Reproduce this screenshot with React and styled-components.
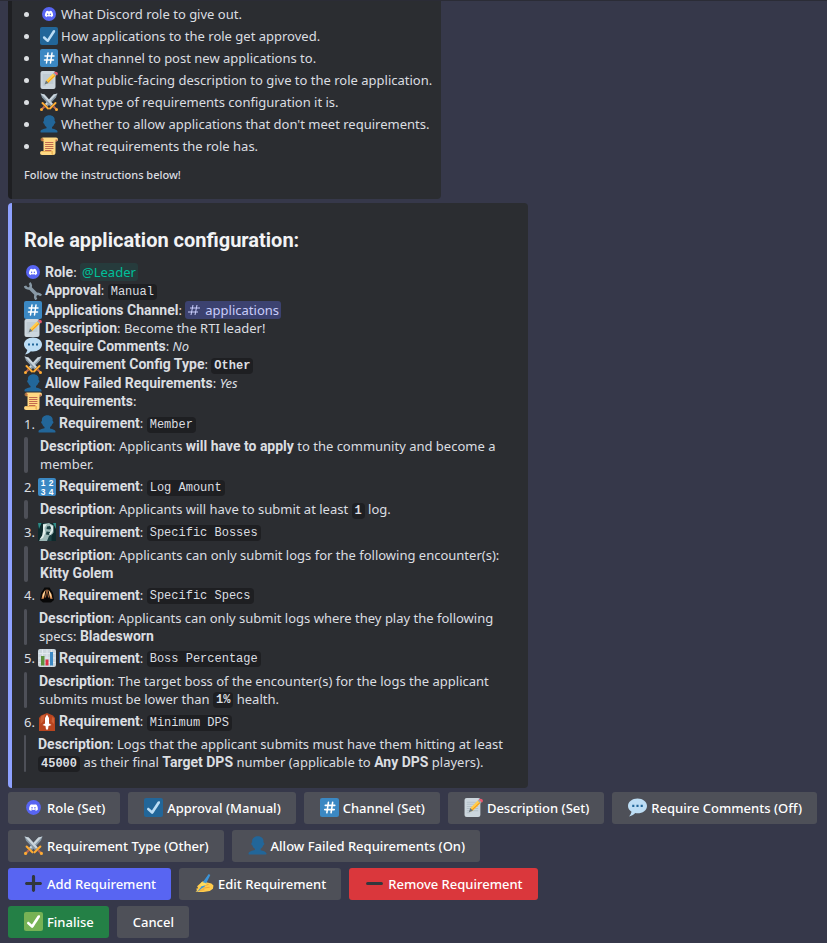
import React from "react";
import styled, { createGlobalStyle } from "styled-components";
import { FaDiscord } from "react-icons/fa";

const GlobalStyle = createGlobalStyle`
  * { box-sizing: border-box; }
  body {
    margin: 0;
    background: #36384a;
    color: #dbdee1;
    font-family: "Noto Sans", "Open Sans", sans-serif;
    font-size: 13px;
    line-height: 18px;
  }
  h2, p, ul, ol, blockquote { margin: 0; padding: 0; }
  b {
    font-family: Roboto, "Noto Sans", sans-serif;
    font-size: 14px;
    line-height: 14px;
  }
`;

const Page = styled.main`
  display: flex;
  flex-direction: column;
  align-items: flex-start;
  min-height: 100vh;
  padding: 0 8px 4px;
  border-top: 1px solid #2b2c36;
`;

const Embed = styled.article`
  max-width: 520px;
  background: #2b2d31;
  border-left: 4px solid ${(p) => p.$accent};
  border-radius: ${(p) => (p.$continued ? "0 0 4px 4px" : "4px")};
  padding: ${(p) => (p.$continued ? "4px 9px 16px 12px" : "25px 16px 16px 12px")};
  margin-bottom: 4px;
`;

const StepList = styled.ul`
  list-style: none;
  display: flex;
  flex-direction: column;
  gap: 4px;
`;

const Step = styled.li`
  display: flex;
  align-items: center;
  height: 18px;
  white-space: nowrap;
  &::before {
    content: "";
    width: 5px;
    height: 5px;
    margin-right: 11px;
    border-radius: 50%;
    background: #dbdee1;
  }
`;

const Footer = styled.p`
  margin-top: 12px;
  font-size: 11px;
  line-height: 16px;
  font-weight: 500;
`;

const Title = styled.h2`
  margin-bottom: 11px;
  font-family: Roboto, "Noto Sans", sans-serif;
  font-size: 20px;
  line-height: 24px;
  font-weight: 700;
  color: #f2f3f5;
`;

const Field = styled.div`
  display: flex;
  align-items: center;
  height: ${(p) => (p.$tall ? 19 : 18)}px;
  white-space: nowrap;
`;

const IconSvg = styled.svg`
  flex: none;
  width: ${(p) => p.$size}px;
  height: ${(p) => p.$size}px;
  margin-right: ${(p) => p.$gap}px;
`;

const Code = styled.code`
  display: inline-block;
  height: 16px;
  padding: 0 3px;
  border-radius: 4px;
  background: #1e1f22;
  font-family: "Liberation Mono", monospace;
  font-size: 12px;
  line-height: 16px;
  vertical-align: middle;
`;

const RoleMention = styled.a`
  display: inline-block;
  padding: 0 2px;
  border-radius: 3px;
  background: #263b3c;
  color: #00c09a;
  text-decoration: none;
`;

const ChannelMention = styled.a`
  display: inline-flex;
  align-items: center;
  gap: 5px;
  height: 18px;
  padding: 0 2px 0 3px;
  border-radius: 3px;
  background: #3c4270;
  color: #c9cdfb;
  text-decoration: none;
  vertical-align: bottom;
`;

const RequirementList = styled.ol`
  list-style: none;
  margin-top: 4px;
  display: flex;
  flex-direction: column;
  gap: 4px;
`;

const Requirement = styled.li`
  display: flex;
  flex-direction: column;
  gap: 4px;
`;

const Ordinal = styled.span`
  width: 14px;
`;

const Quote = styled.blockquote`
  display: flex;
  gap: 12px;
  &::before {
    content: "";
    flex: none;
    width: ${(p) => p.$bar}px;
    border-radius: 4px;
    background: #4e5058;
  }
`;

const Actions = styled.div`
  display: flex;
  flex-direction: column;
  gap: 6px;
`;

const ActionRow = styled.div`
  display: flex;
  gap: 8px;
`;

const tones = {
  secondary: "#4e5058",
  primary: "#5865f2",
  danger: "#da373c",
  success: "#248046",
};

const Button = styled.button`
  display: flex;
  align-items: center;
  height: 32px;
  padding: 0 15px 0 16px;
  border: 0;
  border-radius: 3px;
  background: ${(p) => tones[p.$tone || "secondary"]};
  color: #fff;
  font: inherit;
  font-weight: 500;
  white-space: nowrap;
  cursor: pointer;
`;

const Tile = ({ fill }) => <rect width="36" height="36" rx="4" fill={fill} />;
const tick =
  "M29.28 6.362c-1.156-.751-2.704-.422-3.458.736L14.936 23.877l-5.029-4.65c-1.014-.938-2.596-.875-3.533.138-.937 1.014-.875 2.596.139 3.533l7.209 6.666c.48.445 1.09.665 1.696.665.673 0 1.534-.282 2.099-1.139.332-.506 12.5-19.27 12.5-19.27.751-1.159.421-2.707-.737-3.458z";

const Blade = () => (
  <>
    <path fill="#8899a6" d="M1 1l8 2 17 19-5 5L4 9z" />
    <path fill="#ccd6dd" d="M1 1l8 2 17 19-3 2z" />
  </>
);

const Hilt = () => (
  <>
    <path d="M20 31l11-11" stroke="#ffac33" strokeWidth="4" strokeLinecap="round" />
    <path d="M27 27l5 5" stroke="#bf6952" strokeWidth="4" />
    <circle cx="33" cy="33" r="3" fill="#ffac33" />
  </>
);

const drawings = {
  discord: (
    <>
      <circle cx="18" cy="18" r="14" fill="#5865f2" />
      <FaDiscord x="9" y="9" width="18" height="18" size="18" color="#fff" />
    </>
  ),
  tick: (
    <>
      <Tile fill="#226699" />
      <path fill="#bbddf5" d={tick} />
    </>
  ),
  done: (
    <>
      <Tile fill="#77b255" />
      <path fill="#fff" d={tick} />
    </>
  ),
  hash: (
    <>
      <Tile fill="#3b88c3" />
      <path d="M16 8l-3 20M24 8l-3 20M10 14h18M9 22h18" stroke="#fff" strokeWidth="3" strokeLinecap="round" />
    </>
  ),
  memo: (
    <>
      <rect x="1" width="30" height="36" rx="4" fill="#ccd6dd" />
      <path d="M6 8h20M6 12h20M6 16h20M6 20h20M6 24h20M6 28h5" stroke="#b3c0c9" strokeWidth="2" strokeLinecap="round" />
      <path fill="#ffcc4d" d="M12 19L27 4l5 5-15 15-6 2z" />
      <path fill="#f4900c" d="M16 23L32 8l-1-1-16 15z" />
      <path fill="#66757f" d="M12 19l5 5-8 3z" />
      <path fill="#99aab5" d="M26 5l3-3 5 5-3 3z" />
      <path fill="#ea596e" d="M28 3c4-4 11 1 6 6z" />
    </>
  ),
  swords: (
    <>
      <g transform="translate(36 0) scale(-1 1)">
        <Blade />
      </g>
      <Blade />
      <g transform="translate(36 0) scale(-1 1)">
        <Hilt />
      </g>
      <Hilt />
    </>
  ),
  person: (
    <path
      fill="#226699"
      d="M24 26.799v-2.566c2-1.348 4.08-3.779 4.703-6.896.186.103.206.17.413.17.991 0 1.709-1.287 1.709-2.873 0-1.562-.823-2.827-1.794-2.865.187-.674.293-1.577.293-2.735C29.324 5.168 26 .527 18.541.527c-6.629 0-10.777 4.641-10.777 8.507 0 1.123.069 2.043.188 2.755-.911.137-1.629 1.352-1.629 2.845 0 1.587.804 2.873 1.796 2.873.206 0 .025-.067.209-.17C8.952 20.453 11 22.885 13 24.232v2.414c-5 .645-12 3.437-12 6.23v1.061C1 35 2.076 35 3.137 35h29.725C33.924 35 35 35 35 33.938v-1.061c0-2.615-6-5.225-11-6.078z"
    />
  ),
  scroll: (
    <>
      <path fill="#ffd983" d="M5 1h27a4 4 0 010 8h-1v22a5 5 0 01-5 5H4a4 4 0 010-8h3V8H5z" />
      <path fill="#e39f3d" d="M5 1a4 4 0 100 8h3V5zM4 28h22v8a4 4 0 01-3-6H4z" opacity=".6" />
      <circle cx="5" cy="5" r="2" fill="#c1694f" />
      <path fill="#c1694f" d="M31 5h4a4 4 0 01-4 4z" />
      <path d="M11 11h15M11 15h15M11 19h15M11 23h15M11 27h11" stroke="#c1694f" strokeWidth="2" strokeLinecap="round" />
    </>
  ),
  wrench: (
    <g stroke="#8899a6">
      <path d="M11 11l14 14" strokeWidth="7" />
      <path d="M2 8a7 7 0 0010 4 7 7 0 00-1-10" strokeWidth="5" />
      <path d="M34 27a7 7 0 00-10-2 7 7 0 001 10" strokeWidth="5" />
    </g>
  ),
  speech: (
    <>
      <path
        fill="#bdddf4"
        d="M18 1C8.059 1 0 7.268 0 15c0 4.368 2.574 8.268 6.604 10.835C6.08 28.144 4.859 31.569 2 35c5.758-.96 9.439-3.761 11.716-6.416 1.376.262 2.805.416 4.284.416 9.941 0 18-6.268 18-14S27.941 1 18 1z"
      />
      <path fill="#226699" d="M8 13h4v4H8zM16 13h4v4h-4zM24 13h4v4h-4z" />
    </>
  ),
  numbers: (
    <>
      <Tile fill="#3b88c3" />
      <g fill="#fff" fontFamily="Liberation Sans, sans-serif" fontSize="17" fontWeight="700" textAnchor="middle">
        <text x="10" y="15">1</text>
        <text x="26" y="15">2</text>
        <text x="10" y="33">3</text>
        <text x="26" y="33">4</text>
      </g>
    </>
  ),
  golem: (
    <>
      <rect width="36" height="36" fill="#0e2a2c" />
      <path fill="#9cb8b6" d="M10 2l12-2 9 5v14l-6 8-4 9H2l6-9 2-9z" />
      <path fill="#e3efec" d="M10 3l8-1-5 8 2 9-5 11-7 3 6-9 1-10z" />
      <path fill="#1c4144" d="M18 7l6-1 4 4-5 3-6-1zM17 17l8 1-3 6-6-1zM22 26l5-4v14h-9z" />
      <path fill="#e3efec" d="M24 3l6 4v9l-5 8-3-2 5-8z" />
      <path fill="#2f8c87" d="M30 0h6v12zM0 0h7L2 12z" />
    </>
  ),
  bladesworn: (
    <>
      <path fill="#080808" d="M13 3h10l7 11 2 14-6 5H10l-6-5 2-14z" />
      <path fill="#d98c52" d="M15 7l-3 18-5 1 2-10zM21 7l6 9 2 10-5-1z" />
      <path fill="#ffdca0" d="M15 8l-3 12-3 3 1-7zM21 8l5 8 1 7-3-3z" />
      <path fill="#c07a4a" d="M17 7h2l3 17-2-2-2-12-2 12-2 2z" />
    </>
  ),
  chart: (
    <>
      <rect width="36" height="36" rx="4" fill="#ccd6dd" />
      <path d="M1 9h34M1 18h34M1 27h34M9 1v34M18 1v34M27 1v34" stroke="#e1e8ed" strokeWidth="2" />
      <path fill="#5c913b" d="M6 14h7v19H6z" />
      <path fill="#dd2e44" d="M15 21h6v12h-6z" />
      <path fill="#3b88c3" d="M24 6h6v27h-6z" />
    </>
  ),
  dps: (
    <>
      <path fill="#b9451f" d="M6 5l12-5 12 5 4 5v26H2V10z" />
      <path fill="#cf6237" d="M7 6l7-3-3 13-6 6V11zM29 7l3 4v11l-5-5z" />
      <path fill="#fff" d="M18 3l4 7v11l5 3-6 2-1 7h-4l-1-7-6-2 5-3V10z" />
    </>
  ),
  writing: (
    <>
      <path fill="#ffcc4d" d="M4 23l10-9 5-1 4 3 8 2 4 4-1 6-6 4-12 2H6l-5-1 3-2-2-3 4-1z" />
      <path d="M14 23l11-3M15 27l12-2M8 31l9-1" stroke="#eda93b" strokeWidth="2" strokeLinecap="round" />
      <path fill="#3b94d9" d="M26 0l3 2-11 22-5 3-10 8 9-11 1-6z" />
      <path fill="#ffdc5d" d="M13 15l7 2 2 4-9 2-5-1z" />
    </>
  ),
  plus: (
    <path
      fill="#31373d"
      d="M31 15H21V5c0-1.657-1.343-3-3-3s-3 1.343-3 3v10H5c-1.657 0-3 1.343-3 3s1.343 3 3 3h10v10c0 1.657 1.343 3 3 3s3-1.343 3-3V21h10c1.657 0 3-1.343 3-3s-1.343-3-3-3z"
    />
  ),
  minus: <rect x="2" y="15" width="32" height="6" rx="3" fill="#31373d" />,
};

const Icon = ({ name, size = 18, gap = 3 }) => (
  <IconSvg $size={size} $gap={gap} viewBox="0 0 36 36" fill="none" aria-hidden="true">
    {drawings[name]}
  </IconSvg>
);

const steps = [
  ["discord", "What Discord role to give out."],
  ["tick", "How applications to the role get approved."],
  ["hash", "What channel to post new applications to."],
  ["memo", "What public-facing description to give to the role application."],
  ["swords", "What type of requirements configuration it is."],
  ["person", "Whether to allow applications that don't meet requirements."],
  ["scroll", "What requirements the role has."],
];

const fields = [
  { icon: "discord", name: "Role", value: <RoleMention href="#leader">@Leader</RoleMention> },
  { icon: "wrench", name: "Approval", value: <Code>Manual</Code>, tall: true },
  {
    icon: "hash",
    name: "Applications Channel",
    tall: true,
    value: (
      <ChannelMention href="#applications">
        <svg width="12" height="12" viewBox="0 0 12 12" fill="none" stroke="currentColor" aria-hidden="true">
          <path d="M5 1L3 11M9 1L7 11M2 4h10M0 8h10" />
        </svg>
        applications
      </ChannelMention>
    ),
  },
  { icon: "memo", name: "Description", value: "Become the RTI leader!" },
  { icon: "speech", name: "Require Comments", value: <em>No</em> },
  { icon: "swords", name: "Requirement Config Type", value: <Code as="strong">Other</Code>, tall: true },
  { icon: "person", name: "Allow Failed Requirements", value: <em>Yes</em> },
  { icon: "scroll", name: "Requirements" },
];

const requirements = [
  {
    icon: "person",
    name: "Member",
    text: <>Applicants <b>will have to apply</b> to the community and become a member.</>,
  },
  {
    icon: "numbers",
    name: "Log Amount",
    text: <>Applicants will have to submit at least <Code as="strong">1</Code> log.</>,
  },
  {
    icon: "golem",
    name: "Specific Bosses",
    text: <>Applicants can only submit logs for the following encounter(s): <b>Kitty Golem</b></>,
  },
  {
    icon: "bladesworn",
    name: "Specific Specs",
    bar: 3,
    text: <>Applicants can only submit logs where they play the following specs: <b>Bladesworn</b></>,
  },
  {
    icon: "chart",
    name: "Boss Percentage",
    bar: 3,
    text: (
      <>
        The target boss of the encounter(s) for the logs the applicant submits must be lower than{" "}
        <Code as="strong">1%</Code> health.
      </>
    ),
  },
  {
    icon: "dps",
    name: "Minimum DPS",
    bar: 2,
    text: (
      <>
        Logs that the applicant submits must have them hitting at least <Code as="strong">45000</Code> as their final{" "}
        <b>Target DPS</b> number (applicable to <b>Any DPS</b> players).
      </>
    ),
  },
];

const actions = [
  [
    ["discord", "Role (Set)"],
    ["tick", "Approval (Manual)"],
    ["hash", "Channel (Set)"],
    ["memo", "Description (Set)"],
    ["speech", "Require Comments (Off)"],
  ],
  [
    ["swords", "Requirement Type (Other)"],
    ["person", "Allow Failed Requirements (On)"],
  ],
  [
    ["plus", "Add Requirement", "primary"],
    ["writing", "Edit Requirement"],
    ["minus", "Remove Requirement", "danger"],
  ],
  [
    ["done", "Finalise", "success"],
    [null, "Cancel"],
  ],
];

export default function App() {
  return (
    <>
      <GlobalStyle />
      <Page>
        <Embed $accent="#1e1f22" $continued>
          <StepList>
            {steps.map(([icon, text]) => (
              <Step key={text}>
                <Icon name={icon} />
                {text}
              </Step>
            ))}
          </StepList>
          <Footer>Follow the instructions below!</Footer>
        </Embed>

        <Embed $accent="#8ea1ff">
          <Title>Role application configuration:</Title>
          {fields.map((f) => (
            <Field key={f.name} $tall={f.tall}>
              <Icon name={f.icon} />
              <span>
                <b>{f.name}</b>: {f.value}
              </span>
            </Field>
          ))}
          <RequirementList>
            {requirements.map((r, i) => (
              <Requirement key={r.name}>
                <Field $tall>
                  <Ordinal>{i + 1}.</Ordinal>
                  <Icon name={r.icon} />
                  <span>
                    <b>Requirement</b>: <Code>{r.name}</Code>
                  </span>
                </Field>
                <Quote $bar={r.bar || 4}>
                  <p>
                    <b>Description</b>: {r.text}
                  </p>
                </Quote>
              </Requirement>
            ))}
          </RequirementList>
        </Embed>

        <Actions>
          {actions.map((row) => (
            <ActionRow key={row[0][1]}>
              {row.map(([icon, label, tone]) => (
                <Button key={label} type="button" $tone={tone}>
                  {icon && <Icon name={icon} size={19} gap={4} />}
                  {label}
                </Button>
              ))}
            </ActionRow>
          ))}
        </Actions>
      </Page>
    </>
  );
}
